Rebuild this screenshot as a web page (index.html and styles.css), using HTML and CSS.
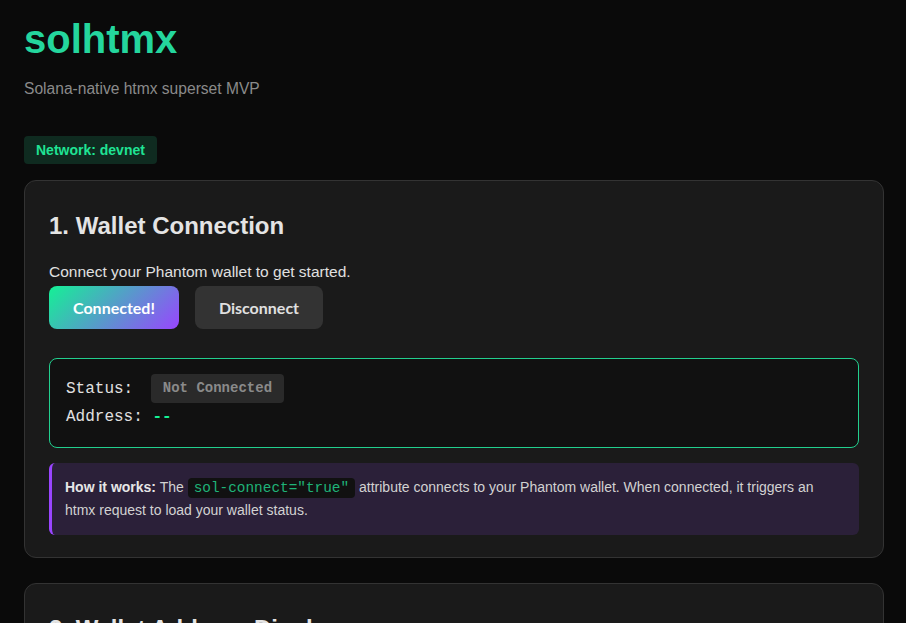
FILE: index.html
```html
<!DOCTYPE html>
<html lang="en">
<head>
<meta charset="utf-8">
<title>solhtmx</title>
<link rel="stylesheet" href="styles.css">
</head>
<body>
<div class="page">
  <h1 class="title">solhtmx</h1>
  <p class="subtitle">Solana-native htmx superset MVP</p>
  <span class="network">Network: devnet</span>

  <section class="card">
    <h2>1. Wallet Connection</h2>
    <p class="lead">Connect your Phantom wallet to get started.</p>
    <div class="actions">
      <button class="btn btn-primary">Connected!</button>
      <button class="btn btn-secondary">Disconnect</button>
    </div>
    <div class="status-box">
      <div class="status-line status-first">Status: <span class="pill">Not Connected</span></div>
      <div class="status-line">Address: <span class="addr">--</span></div>
    </div>
    <div class="help">
      <strong>How it works:</strong> The <code>sol-connect="true"</code> attribute connects to your Phantom wallet. When connected, it triggers an htmx request to load your wallet status.
    </div>
  </section>

  <section class="card">
    <h2>2. Wallet Address Display</h2>
    <p class="lead">Your connected wallet address will appear below.</p>
  </section>
</div>
</body>
</html>
```

FILE: styles.css
```css
html, body {
  margin: 0;
  padding: 0;
  background: #0a0a0a;
  overflow: hidden;
}

body {
  font-family: "Liberation Sans", Arial, Helvetica, sans-serif;
  color: #e0e0e0;
  line-height: 1.6;
  font-size: 16px;
}

.page {
  padding: 15px 22px 0 24px;
}

.title {
  margin: 0;
  font-size: 40px;
  line-height: 1.2;
  font-weight: 700;
  color: #24d69d;
}

.subtitle {
  margin: 14px 0 34px;
  color: #8a8a8a;
  font-size: 15.6px;
}

.network {
  display: inline-block;
  padding: 6px 12px;
  line-height: 16px;
  font-size: 14px;
  font-weight: 700;
  color: #1fe394;
  background: #0f2b20;
  border-radius: 4px;
}

.card {
  margin-top: 16px;
  margin-bottom: 25px;
  background: #1a1a1a;
  border: 1px solid #333333;
  border-radius: 12px;
  padding: 24px 24px 22px;
}

.card h2 {
  margin: 2px 0 14px;
  font-size: 24px;
  font-weight: 700;
  color: #e4e4e4;
}

.lead {
  margin: 0 0 1px;
  font-size: 15.5px;
  line-height: 25.6px;
  color: #e0e0e0;
}

.actions {
  display: flex;
  gap: 16px;
}

.btn {
  border: none;
  border-radius: 8px;
  padding: 12px 24px;
  font-family: Lato, "Open Sans", sans-serif;
  font-weight: 700;
  font-size: 16px;
  line-height: 19px;
}

.btn-primary {
  background: linear-gradient(135deg, #14f195 0%, #9945ff 100%);
  color: #ffffff;
}

.btn-secondary {
  background: #333333;
  color: #e0e0e0;
}

.status-box {
  margin-top: 29px;
  background: #111111;
  border: 1px solid #22cf8e;
  border-radius: 8px;
  padding: 15px 16px 16px;
  font-family: "Liberation Mono", "Courier New", monospace;
  font-size: 16px;
  color: #e0e0e0;
}

.status-line {
  line-height: 27px;
}

.status-first {
  line-height: 30px;
}

.pill {
  display: inline-block;
  margin-left: 8px;
  padding: 3px 12px;
  line-height: 23px;
  font-size: 14px;
  font-weight: 700;
  color: #8a8a8a;
  background: #2a2a2a;
  border-radius: 4px;
  vertical-align: middle;
}

.addr {
  color: #14f195;
  font-weight: 700;
}

.help {
  margin-top: 15px;
  background: #2b2039;
  border-left: 3px solid #9945ff;
  border-radius: 6px;
  padding: 13px 16px 13px 13px;
  font-size: 14px;
  line-height: 22.4px;
  color: #d2d2d2;
}

.help strong {
  color: #e6e6e6;
}

.help code {
  font-family: "Liberation Mono", "Courier New", monospace;
  font-size: 14.4px;
  line-height: 22.4px;
  padding: 2px 6px;
  background: #111111;
  color: #1fb378;
  border-radius: 4px;
}
```
